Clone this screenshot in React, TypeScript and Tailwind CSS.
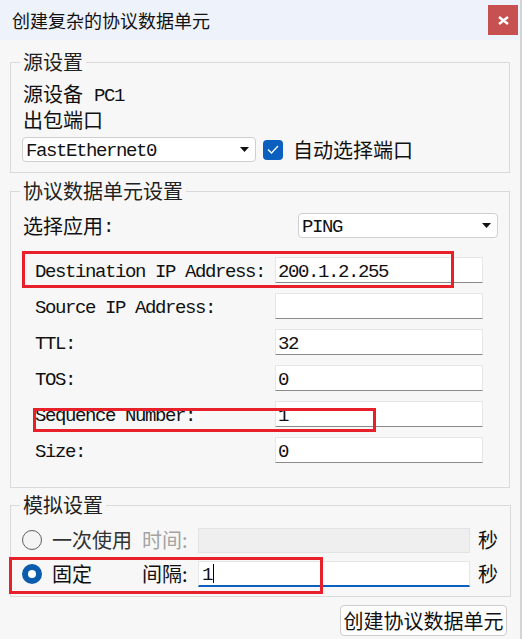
import * as React from 'react'

const mono = "font-['Liberation_Mono','Noto_Sans_CJK_SC',monospace] text-[19px] tracking-[-1.4px] translate-y-[2px]"
const cjk = "font-['Noto_Sans_CJK_SC',sans-serif] text-[20px]"

function Arrow() {
  return (
    <svg width="9" height="5" viewBox="0 0 9 5" className="shrink-0">
      <path d="M0 0h9L4.5 5z" fill="#111" />
    </svg>
  )
}

function Combo({ value, className }: { value: string; className: string }) {
  return (
    <div
      className={`h-[25px] bg-white border border-[#cfcfcf] rounded-[4px] flex items-center pl-[3px] pr-[6px] ${className}`}
    >
      <span className={`${mono} text-[#111] leading-none`}>{value}</span>
      <span className="ml-auto">
        <Arrow />
      </span>
    </div>
  )
}

function Field({ label, value }: { label: string; value: string }) {
  return (
    <div className="flex items-center h-[26px] pl-[12px]">
      <span className={`${mono} text-[#111] w-[240px] leading-none`}>{label}</span>
      <div className="w-[208px] h-[26px] bg-white border border-[#e6e6e6] border-b-[#8a8a8a] flex items-center pl-[2px]">
        <span className={`${mono} text-[#111] leading-none`}>{value}</span>
      </div>
    </div>
  )
}

function Group({ title, className, children }: { title: string; className: string; children: React.ReactNode }) {
  return (
    <fieldset className={`mx-[10px] border border-[#dadada] px-[12px] ${className}`}>
      <legend className={`${cjk} text-[#222] leading-[24px] -ml-[3px] px-[3px]`}>{title}</legend>
      {children}
    </fieldset>
  )
}

export default function App() {
  return (
    <div className="w-[522px] h-[639px] bg-[#f7f7f7] relative overflow-hidden border-r-2 border-[#d4d4d4]">
      <div className="h-[40px] bg-[#eef2fb] flex items-center pl-[12px]">
        <span className="font-['Noto_Sans_CJK_SC',sans-serif] text-[18px] text-[#111]">创建复杂的协议数据单元</span>
        <div className="ml-auto mr-[2px] w-[30px] h-[30px] bg-[#c75050] flex items-center justify-center">
          <svg width="11" height="9" viewBox="0 0 11 9">
            <path d="M1 1l9 7M10 1L1 8" stroke="#fff" strokeWidth="2.4" />
          </svg>
        </div>
      </div>

      <Group title="源设置" className="mt-[10px] pt-[7px] pb-[10px]">
        <div className="h-[26px] flex items-center text-[#111]">
          <span className={`${cjk} leading-none`}>源设备</span>
          <span className={`${mono} leading-none ml-[11px]`}>PC1</span>
        </div>
        <div className="h-[26px] flex items-center text-[#111]">
          <span className={`${cjk} leading-none`}>出包端口</span>
        </div>
        <div className="mt-[4px] flex items-center">
          <Combo value="FastEthernet0" className="w-[234px] -ml-[1px]" />
          <div className="ml-[7px] w-[20px] h-[20px] rounded-[4px] bg-[#0b5fbe] flex items-center justify-center">
            <svg width="12" height="9" viewBox="0 0 12 9">
              <path d="M1 4.5l3.5 3.5L11 1" stroke="#fff" strokeWidth="1.3" fill="none" />
            </svg>
          </div>
          <span className={`${cjk} text-[#111] ml-[10px] leading-none`}>自动选择端口</span>
        </div>
      </Group>

      <Group title="协议数据单元设置" className="mt-[6px] pt-[10px] pb-[24px]">
        <div className="flex items-center h-[25px]">
          <span className={`${cjk} text-[#111] leading-none`}>选择应用</span>
          <span className={`${mono} text-[#111] leading-none`}>:</span>
          <Combo value="PING" className="w-[200px] ml-auto -mr-[1px]" />
        </div>
        <div className="mt-[19px] flex flex-col gap-[10px]">
          <Field label="Destination IP Address:" value="200.1.2.255" />
          <Field label="Source IP Address:" value="" />
          <Field label="TTL:" value="32" />
          <Field label="TOS:" value="0" />
          <Field label="Sequence Number:" value="1" />
          <Field label="Size:" value="0" />
        </div>
      </Group>

      <Group title="模拟设置" className="mt-[5px] pt-[10px] pb-[9px]">
        <div className="flex items-center h-[26px]">
          <div className="-ml-[1px] w-[20px] h-[20px] rounded-full border-[1.5px] border-[#5e5e5e] bg-[#f4f4f4]" />
          <span className={`${cjk} text-[#333] leading-none ml-[10px] w-[90px]`}>一次使用</span>
          <span className={`${cjk} text-[#a3a3a3] leading-none w-[56px]`}>时间:</span>
          <div className="w-[272px] h-[25px] bg-[#efefef] border border-[#e3e3e3]" />
          <span className={`${cjk} text-[#111] leading-none ml-[8px]`}>秒</span>
        </div>
        <div className="flex items-center h-[26px] mt-[8px]">
          <div className="-ml-[1px] w-[20px] h-[20px] rounded-full bg-[#0b5cad] flex items-center justify-center">
            <div className="w-[8px] h-[8px] rounded-full bg-white" />
          </div>
          <span className={`${cjk} text-[#111] leading-none ml-[10px] w-[90px]`}>固定</span>
          <span className={`${cjk} text-[#111] leading-none w-[56px]`}>间隔:</span>
          <div className="w-[272px] h-[26px] bg-white border border-[#e6e6e6] border-b-2 border-b-[#0b5fbe] flex items-center pl-[3px]">
            <span className={`${mono} text-[#111] leading-none`}>1</span>
            <span className="w-[1px] h-[19px] bg-black ml-[1px]" />
          </div>
          <span className={`${cjk} text-[#111] leading-none ml-[8px]`}>秒</span>
        </div>
      </Group>

      <div className="flex justify-end mt-[8px] pr-[13px]">
        <div className={`w-[167px] h-[31px] bg-[#fdfdfd] border border-[#cccccc] rounded-[4px] flex items-center justify-center ${cjk} text-[#111] leading-none`}>
          创建协议数据单元
        </div>
      </div>

      <div className="absolute left-[22px] top-[251px] w-[432px] h-[37px] border-[3px] border-[#e8202a]" />
      <div className="absolute left-[33px] top-[408px] w-[343px] h-[24px] border-[3px] border-[#e8202a]" />
      <div className="absolute left-[9px] top-[557px] w-[314px] h-[37px] border-[3px] border-[#e8202a]" />
    </div>
  )
}
